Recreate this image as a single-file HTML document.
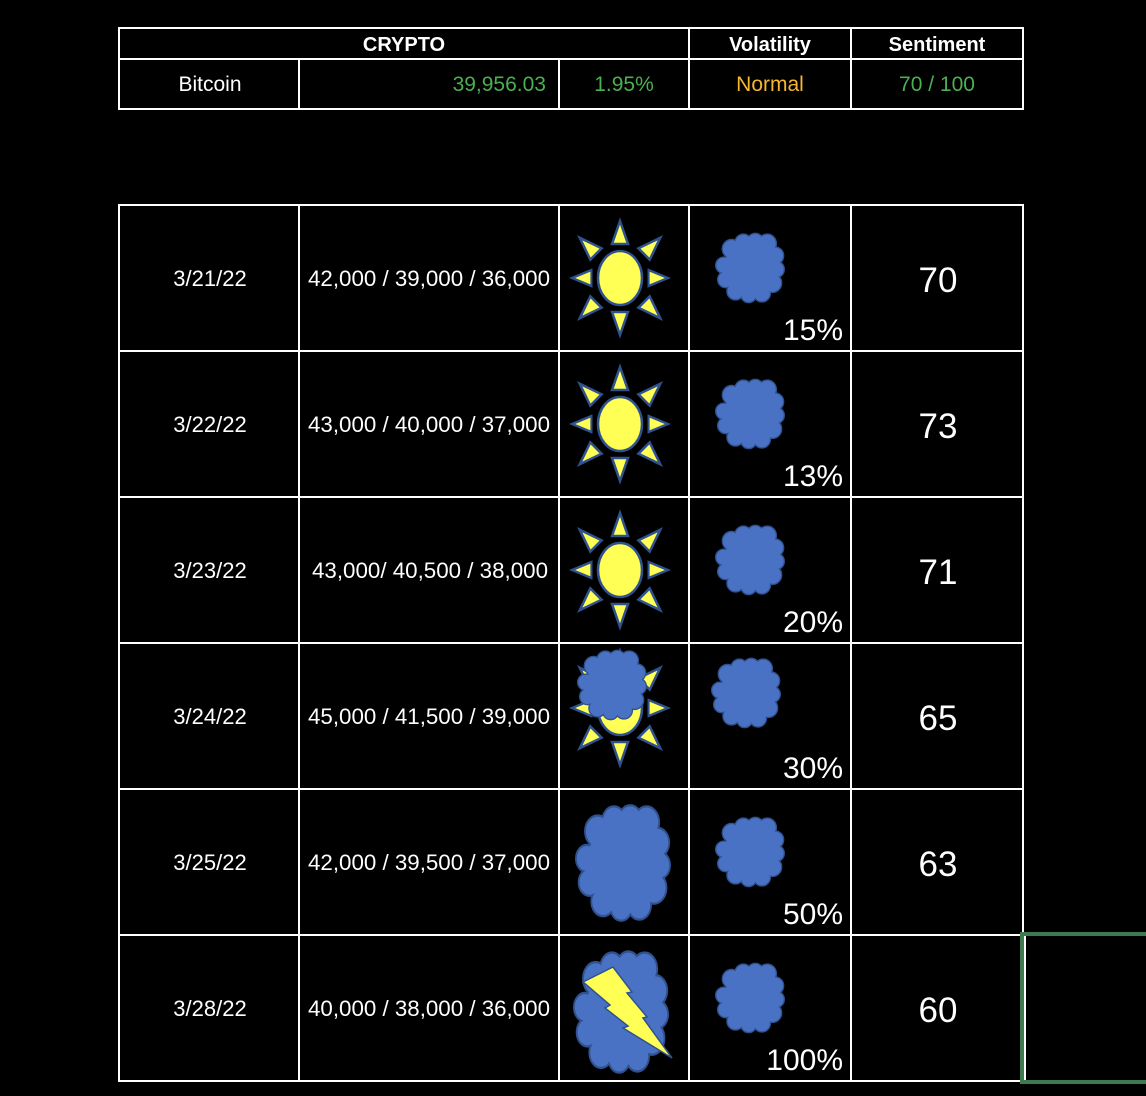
<!DOCTYPE html>
<html><head><meta charset="utf-8"><style>
html,body{margin:0;padding:0;background:#000;}
svg{display:block;}
text{font-family:"Liberation Sans",sans-serif;fill:#fff;}
</style></head><body>
<svg width="1146" height="1096" viewBox="0 0 1146 1096" xmlns="http://www.w3.org/2000/svg">
<defs>
<g id="cl">
<ellipse cx="50" cy="52" rx="40" ry="40"/>
<circle cx="22" cy="22" r="13"/><circle cx="40" cy="13" r="12"/><circle cx="58" cy="12" r="12"/><circle cx="76" cy="14" r="13"/>
<circle cx="88" cy="32" r="12"/><circle cx="90" cy="52" r="11"/><circle cx="84" cy="72" r="13"/>
<circle cx="68" cy="87" r="12"/><circle cx="48" cy="89" r="11"/><circle cx="28" cy="84" r="12"/>
<circle cx="13" cy="67" r="11"/><circle cx="10" cy="46" r="11"/>
</g>
<symbol id="cloud" viewBox="-3 -3 106 106" preserveAspectRatio="none">
<use href="#cl" fill="#2f528f" stroke="#2f528f" stroke-width="4"/>
<use href="#cl" fill="#4a72c4"/>
</symbol>
<g id="ray"><polygon points="0,-57 -8,-34 8,-34"/></g>
<symbol id="sun" viewBox="-50 -60 100 120" overflow="visible">
<g fill="#ffff55" stroke="#2f528f" stroke-width="2.5">
<use href="#ray"/>
<use href="#ray" transform="rotate(45)"/>
<use href="#ray" transform="rotate(90) scale(1,0.84)"/>
<use href="#ray" transform="rotate(135)"/>
<use href="#ray" transform="rotate(180)"/>
<use href="#ray" transform="rotate(225)"/>
<use href="#ray" transform="rotate(270) scale(1,0.84)"/>
<use href="#ray" transform="rotate(315)"/>
<ellipse cx="0" cy="0" rx="22" ry="27"/>
</g>
</symbol>
</defs>
<g stroke="#fff" stroke-width="2" fill="none">
<rect x="119" y="28" width="904" height="81"/>
<line x1="119" y1="59" x2="1023" y2="59"/>
<line x1="689" y1="28" x2="689" y2="109"/>
<line x1="851" y1="28" x2="851" y2="109"/>
<line x1="299" y1="59" x2="299" y2="109"/>
<line x1="559" y1="59" x2="559" y2="109"/>
<rect x="119" y="205" width="904" height="876"/>
<line x1="119" y1="351" x2="1023" y2="351"/>
<line x1="119" y1="497" x2="1023" y2="497"/>
<line x1="119" y1="643" x2="1023" y2="643"/>
<line x1="119" y1="789" x2="1023" y2="789"/>
<line x1="119" y1="935" x2="1146" y2="935"/>
<line x1="1023" y1="1081" x2="1146" y2="1081"/>
<line x1="299" y1="205" x2="299" y2="1081"/>
<line x1="559" y1="205" x2="559" y2="1081"/>
<line x1="689" y1="205" x2="689" y2="1081"/>
<line x1="851" y1="205" x2="851" y2="1081"/>
<line x1="1025" y1="935" x2="1025" y2="1081"/>
</g>
<path d="M1146 934 H1022 V1082 H1146" stroke="#3e7a4e" stroke-width="4" fill="none"/>

<g font-size="20" text-anchor="middle">
<text x="404" y="51" font-weight="bold">CRYPTO</text>
<text x="770" y="51" font-weight="bold">Volatility</text>
<text x="937" y="51" font-weight="bold">Sentiment</text>
<text x="210" y="91" font-size="21">Bitcoin</text>
<text x="546" y="91" text-anchor="end" style="fill:#4caf50" font-size="21">39,956.03</text>
<text x="624" y="91" style="fill:#4caf50" font-size="21">1.95%</text>
<text x="770" y="91" style="fill:#f5b731" font-size="21">Normal</text>
<text x="937" y="91" style="fill:#4caf50" font-size="21">70 / 100</text>
</g>

<g font-size="22" text-anchor="middle">
<text x="210" y="286">3/21/22</text>
<text x="429" y="286" textLength="242" lengthAdjust="spacingAndGlyphs">42,000 / 39,000 / 36,000</text>
<text x="210" y="432">3/22/22</text>
<text x="429" y="432" textLength="242" lengthAdjust="spacingAndGlyphs">43,000 / 40,000 / 37,000</text>
<text x="210" y="578">3/23/22</text>
<text x="430" y="578" textLength="236" lengthAdjust="spacingAndGlyphs">43,000/ 40,500 / 38,000</text>
<text x="210" y="724">3/24/22</text>
<text x="429" y="724" textLength="242" lengthAdjust="spacingAndGlyphs">45,000 / 41,500 / 39,000</text>
<text x="210" y="870">3/25/22</text>
<text x="429" y="870" textLength="242" lengthAdjust="spacingAndGlyphs">42,000 / 39,500 / 37,000</text>
<text x="210" y="1016">3/28/22</text>
<text x="429" y="1016" textLength="242" lengthAdjust="spacingAndGlyphs">40,000 / 38,000 / 36,000</text>
</g>
<g font-size="35" text-anchor="middle">
<text x="938" y="292">70</text>
<text x="938" y="438">73</text>
<text x="938" y="584">71</text>
<text x="938" y="730">65</text>
<text x="938" y="876">63</text>
<text x="938" y="1022">60</text>
</g>
<g font-size="30" text-anchor="end">
<text x="843" y="340">15%</text>
<text x="843" y="486">13%</text>
<text x="843" y="632">20%</text>
<text x="843" y="778">30%</text>
<text x="843" y="924">50%</text>
<text x="843" y="1070">100%</text>
</g>

<use href="#sun" x="570" y="218" width="100" height="120"/>
<use href="#sun" x="570" y="364" width="100" height="120"/>
<use href="#sun" x="570" y="510" width="100" height="120"/>
<use href="#sun" x="570" y="648" width="100" height="120"/>
<use href="#cloud" x="577" y="649" width="70" height="72"/>
<use href="#cloud" x="575" y="803" width="96" height="120"/>
<use href="#cloud" x="573" y="949" width="96" height="126"/>
<polygon points="583,982 613,967 632,992 627,993 647,1017 643,1018 672,1058 623,1028 628,1026 605,1008 610,1005" fill="#ffff55" stroke="#2f528f" stroke-width="1.5"/>

<use href="#cloud" x="715" y="232" width="70" height="72"/>
<use href="#cloud" x="715" y="378" width="70" height="72"/>
<use href="#cloud" x="715" y="524" width="70" height="72"/>
<use href="#cloud" x="711" y="657" width="70" height="72"/>
<use href="#cloud" x="715" y="816" width="70" height="72"/>
<use href="#cloud" x="715" y="962" width="70" height="72"/>
</svg>
</body></html>
